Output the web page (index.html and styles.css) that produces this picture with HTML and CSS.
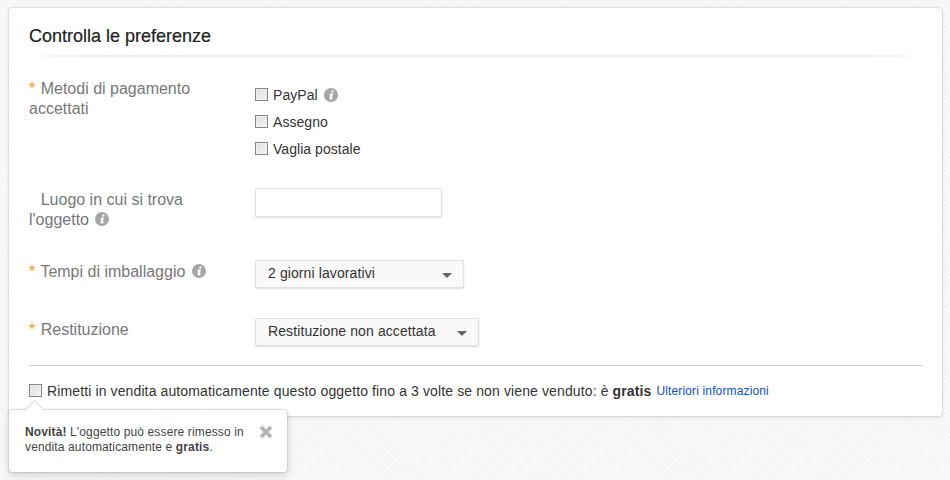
FILE: index.html
```html
<!DOCTYPE html>
<html lang="it">
<head>
<meta charset="utf-8">
<title>Controlla le preferenze</title>
<link rel="stylesheet" href="styles.css">
</head>
<body>
<svg class="defs" width="0" height="0" aria-hidden="true">
  <symbol id="info" viewBox="0 0 14 14">
    <circle cx="7" cy="7" r="7" fill="#a6a6a6"/>
    <path d="M7.6 2.6h2l-.4 1.900h-2zM6.900 5.600h2L7.900 10c-.1.4.3.4 1 .2l-.2.9c-.6.3-1.400.4-2 .4-.9 0-1.400-.5-1.200-1.300l.6-3.200-.7.1.2-.9z" fill="#fff"/>
  </symbol>
</svg>
<main class="card">
  <h1 class="title">Controlla le preferenze</h1>
  <div class="rows">
    <div class="row row-pay">
      <div class="label"><span class="req">*</span> Metodi di pagamento accettati</div>
      <div class="options">
        <label class="opt"><input type="checkbox" class="cb">PayPal<svg class="info info-opt"><use href="#info"/></svg></label>
        <label class="opt"><input type="checkbox" class="cb">Assegno</label>
        <label class="opt"><input type="checkbox" class="cb">Vaglia postale</label>
      </div>
    </div>
    <div class="row row-place">
      <div class="label"><span class="req req-blank">*</span> Luogo in cui si trova l'oggetto <svg class="info"><use href="#info"/></svg></div>
      <input type="text" class="field" aria-label="Luogo in cui si trova l'oggetto">
    </div>
    <div class="row row-time">
      <div class="label"><span class="req">*</span> Tempi di imballaggio <svg class="info"><use href="#info"/></svg></div>
      <div class="select select-time">2 giorni lavorativi<span class="caret"></span></div>
    </div>
    <div class="row row-return">
      <div class="label"><span class="req">*</span> Restituzione</div>
      <div class="select select-return">Restituzione non accettata<span class="caret"></span></div>
    </div>
  </div>
  <div class="relist">
    <input type="checkbox" class="cb" aria-label="Rimetti in vendita">
    <span class="relist-text">Rimetti in vendita automaticamente questo oggetto fino a 3 volte se non viene venduto: è <b>gratis</b></span>
    <a class="more" href="#">Ulteriori informazioni</a>
  </div>
</main>
<aside class="pop">
  <p class="pop-text"><b>Novità!</b> L'oggetto può essere rimesso in vendita automaticamente e <b>gratis</b>.</p>
  <svg class="close" viewBox="0 0 14 14" aria-hidden="true"><path d="M2 2l10 10M12 2L2 12" stroke="#b4b4b4" stroke-width="3.800" fill="none"/></svg>
</aside>
</body>
</html>
```
FILE: styles.css
```css
* { box-sizing: border-box; }
html, body { height: 100%; }
body {
  margin: 0;
  padding: 8px 8px 0 9px;
  position: relative;
  overflow: hidden;
  font-family: "Liberation Sans", Arial, sans-serif;
  color: #333;
  background-color: #f4f4f4;
  background-image:
    repeating-linear-gradient(45deg, rgba(255,255,255,.45) 0 1px, transparent 1px 3px),
    repeating-linear-gradient(-45deg, rgba(255,255,255,.3) 0 1px, transparent 1px 3px);
}
.defs { position: absolute; }
.card {
  width: 933px;
  height: 408px;
  padding: 0 20px;
  background: #fff;
  border-radius: 3px;
  box-shadow: 0 0 2px rgba(0,0,0,.3), 0 2px 5px rgba(0,0,0,.06);
}
.title {
  margin: 0;
  height: 49px;
  padding-top: 18px;
  font-size: 18px;
  line-height: 21px;
  font-weight: 400;
  color: #222;
  -webkit-text-stroke: .2px #222;
  background: linear-gradient(90deg, #fff, #eee 6%, #eee 94%, #fff) left bottom / 100% 2px no-repeat;
}
.rows { height: 309px; border-bottom: 1px solid #ccc; }
.row { display: flex; }
.row-pay { padding-top: 22px; height: 109px; }
.row-place { height: 94px; padding-top: 24px; }
.row-time { height: 58px; }
.label {
  width: 226px;
  padding-right: 50px;
  font-size: 16px;
  line-height: 20px;
  color: #777;
  flex: none;
}
.row-place .label { padding-right: 40px; }
.row-time .label, .row-return .label { padding-top: 2px; padding-right: 0; }
.req { color: #f90; margin-right: 1px; }
.req-blank { visibility: hidden; }
.options { display: flex; flex-direction: column; gap: 7px; margin-top: -1px; }
.opt {
  display: flex;
  align-items: center;
  height: 20px;
  font-size: 14px;
  letter-spacing: .05px;
  color: #333;
}
.opt .cb { margin-top: -2px; }
.options .opt:first-child { margin-top: 7px; }
.cb {
  appearance: none;
  -webkit-appearance: none;
  width: 13px;
  height: 13px;
  margin: 0 5px 0 0;
  flex: none;
  border: 1px solid #858585;
  background: linear-gradient(135deg, #dcdcdc, #f6f6f6);
  box-shadow: inset 0 0 0 1px #f0f0f0;
}
.info { display: inline-block; width: 14px; height: 14px; vertical-align: -1px; margin-left: 2px; }
.info-opt { margin-left: 6px; }
.field {
  display: block;
  width: 187px;
  height: 29px;
  margin: -2px 0 0;
  background: #fff;
  border: 1px solid #e0e0e0;
  border-radius: 2px;
  box-shadow: 0 1px 2px rgba(0,0,0,.12);
}
.select {
  display: flex;
  align-items: center;
  justify-content: space-between;
  height: 28px;
  padding: 0 11px 2px 12px;
  font-size: 14px;
  letter-spacing: .1px;
  color: #333;
  background: #f9f9f9;
  border: 1px solid #e0e0e0;
  border-radius: 2px;
  box-shadow: 0 1px 2px rgba(0,0,0,.14);
}
.select-time { width: 209px; }
.select-return { width: 224px; }
.caret {
  width: 0;
  height: 0;
  border-left: 5.500px solid transparent;
  border-right: 5.500px solid transparent;
  border-top: 5px solid #666;
  margin-top: 4px;
}
.relist {
  display: flex;
  align-items: center;
  height: 24px;
  margin-top: 13px;
  font-size: 14px;
  color: #333;
  white-space: nowrap;
}
.relist .cb { margin-top: -2px; }
.relist-text { letter-spacing: .12px; }
.relist b { color: #333; }
.more { margin-left: 5px; font-size: 12px; letter-spacing: .14px; color: #0e4fc0; text-decoration: none; }
.pop {
  position: absolute;
  left: 9px;
  top: 410px;
  width: 278px;
  height: 62px;
  padding: 15px 16px;
  display: flex;
  background: #fff;
  border-radius: 3px;
  box-shadow: 0 0 2px rgba(0,0,0,.35), 0 3px 8px rgba(0,0,0,.15);
}
.pop::before {
  content: "";
  position: absolute;
  left: 18px;
  top: -7px;
  width: 14px;
  height: 14px;
  background: #fff;
  transform: rotate(45deg);
  border-top: 1px solid #d8d8d8;
  border-left: 1px solid #d8d8d8;
}
.pop-text {
  position: relative;
  margin: 0;
  width: 230px;
  font-size: 12px;
  line-height: 15px;
  letter-spacing: .13px;
  color: #444;
}
.close { position: absolute; left: 250px; top: 15px; width: 14px; height: 14px; }
```
